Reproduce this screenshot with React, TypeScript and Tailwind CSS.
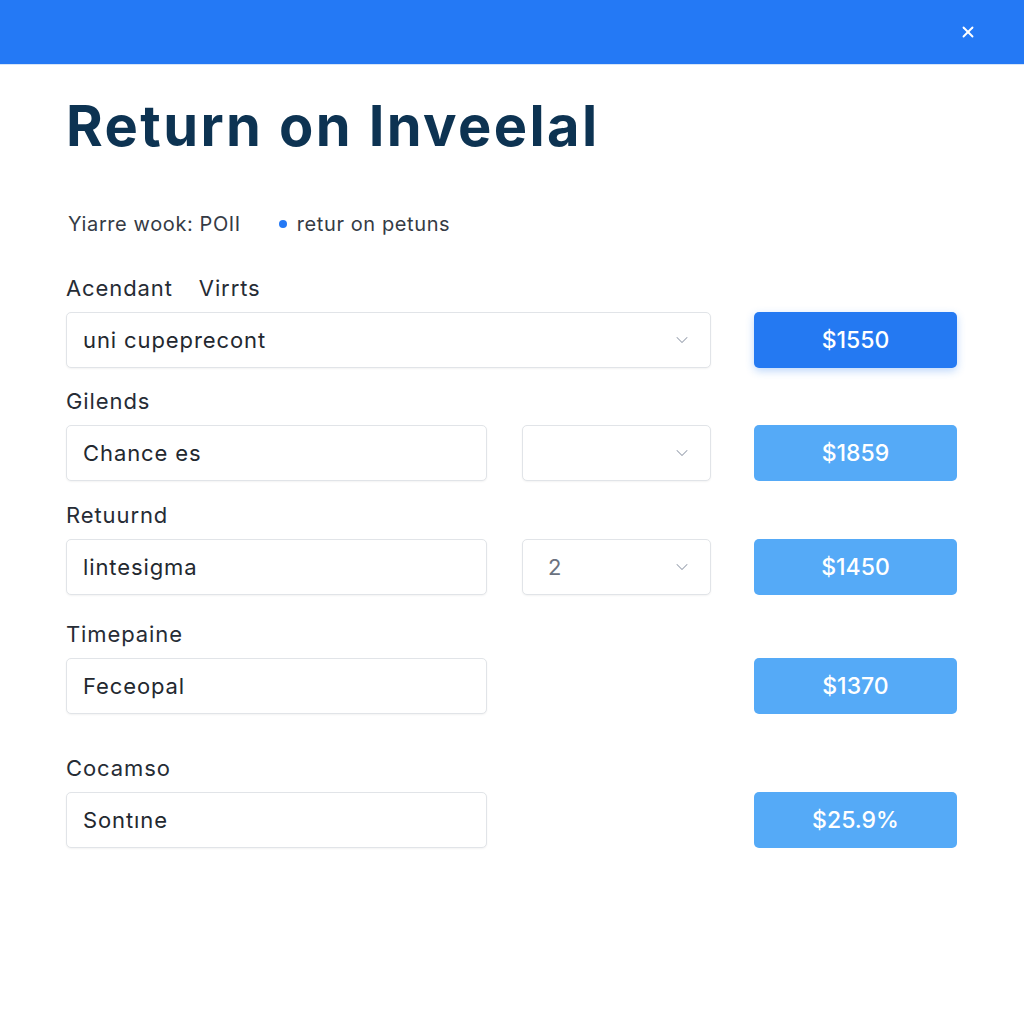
import { X, ChevronDown } from "lucide-react";

type Row = {
  label: React.ReactNode;
  input: string;
  select?: string;
  value: string;
  primary?: boolean;
  wide?: boolean;
  gapTop: string;
};

const rows: Row[] = [
  {
    label: (
      <>
        Acendant<span className="ml-[26px]">Virrts</span>
      </>
    ),
    input: "uni cupeprecont",
    value: "$1550",
    primary: true,
    wide: true,
    gapTop: "mt-[37px]",
  },
  { label: "Gilends", input: "Chance es", select: "", value: "$1859", gapTop: "mt-[19px]" },
  { label: "Retuurnd", input: "lintesigma", select: "2", value: "$1450", gapTop: "mt-[20px]" },
  { label: "Timepaine", input: "Feceopal", value: "$1370", gapTop: "mt-[25px]" },
  { label: "Cocamso", input: "Sontıne", value: "$25.9%", gapTop: "mt-[40px]" },
];

function Chevron() {
  return <ChevronDown className="h-5 w-5 text-gray-400" strokeWidth={1.25} />;
}

export default function App() {
  return (
    <div
      className="min-h-screen w-[1024px] bg-white"
      style={{ fontFamily: "Inter, 'Open Sans', sans-serif" }}
    >
      <header className="flex h-[65px] items-center justify-end border-b border-[#d6e5f8] bg-[#2479f5] pr-[47px]">
        <X className="h-[18px] w-[18px] text-white" strokeWidth={2.5} />
      </header>

      <main className="px-[66px]">
        <h1 className="mt-[25px] text-[56px] font-bold leading-[72px] tracking-[2.4px] text-[#0d3352]">
          Return on Inveelal
        </h1>

        <div className="mt-[49px] flex items-center text-[20px] leading-[26px] tracking-[0.6px] text-[#353b45]">
          <span className="ml-[2px]">Yiarre wook: POII</span>
          <span className="ml-[38px] mr-[10px] h-[8px] w-[8px] rounded-full bg-[#2479f5]" />
          <span>retur on petuns</span>
        </div>

        {rows.map((r, i) => (
          <div key={i} className={r.gapTop}>
            <div className="text-[22px] leading-[28px] tracking-[0.9px] text-[#262c35]">{r.label}</div>
            <div className="mt-[10px] flex items-center">
              <div className="flex w-[645px] gap-[35px]">
                <div
                  className={`flex h-[56px] items-center justify-between rounded-[5px] border border-[#e1e4e8] bg-white pl-[16px] pr-[18px] text-[22px] tracking-[0.9px] text-[#23282f] shadow-[0_1px_2px_rgba(0,0,0,0.05)] ${
                    r.wide ? "w-[645px]" : "w-[421px]"
                  }`}
                >
                  <span>{r.input}</span>
                  {r.wide && <Chevron />}
                </div>
                {r.select !== undefined && (
                  <div className="flex h-[56px] w-[189px] items-center justify-between rounded-[5px] border border-[#e1e4e8] bg-white pl-[25px] pr-[18px] text-[22px] text-[#6b7280] shadow-[0_1px_2px_rgba(0,0,0,0.05)]">
                    <span>{r.select}</span>
                    <Chevron />
                  </div>
                )}
              </div>
              <div
                className={`ml-[43px] flex h-[56px] w-[203px] items-center justify-center rounded-[5px] text-[23px] font-medium text-white ${
                  r.primary
                    ? "bg-[#2479f2] shadow-[0_3px_8px_rgba(36,121,242,0.3)]"
                    : "bg-[#55aaf7]"
                }`}
              >
                {r.value}
              </div>
            </div>
          </div>
        ))}
      </main>
    </div>
  );
}
